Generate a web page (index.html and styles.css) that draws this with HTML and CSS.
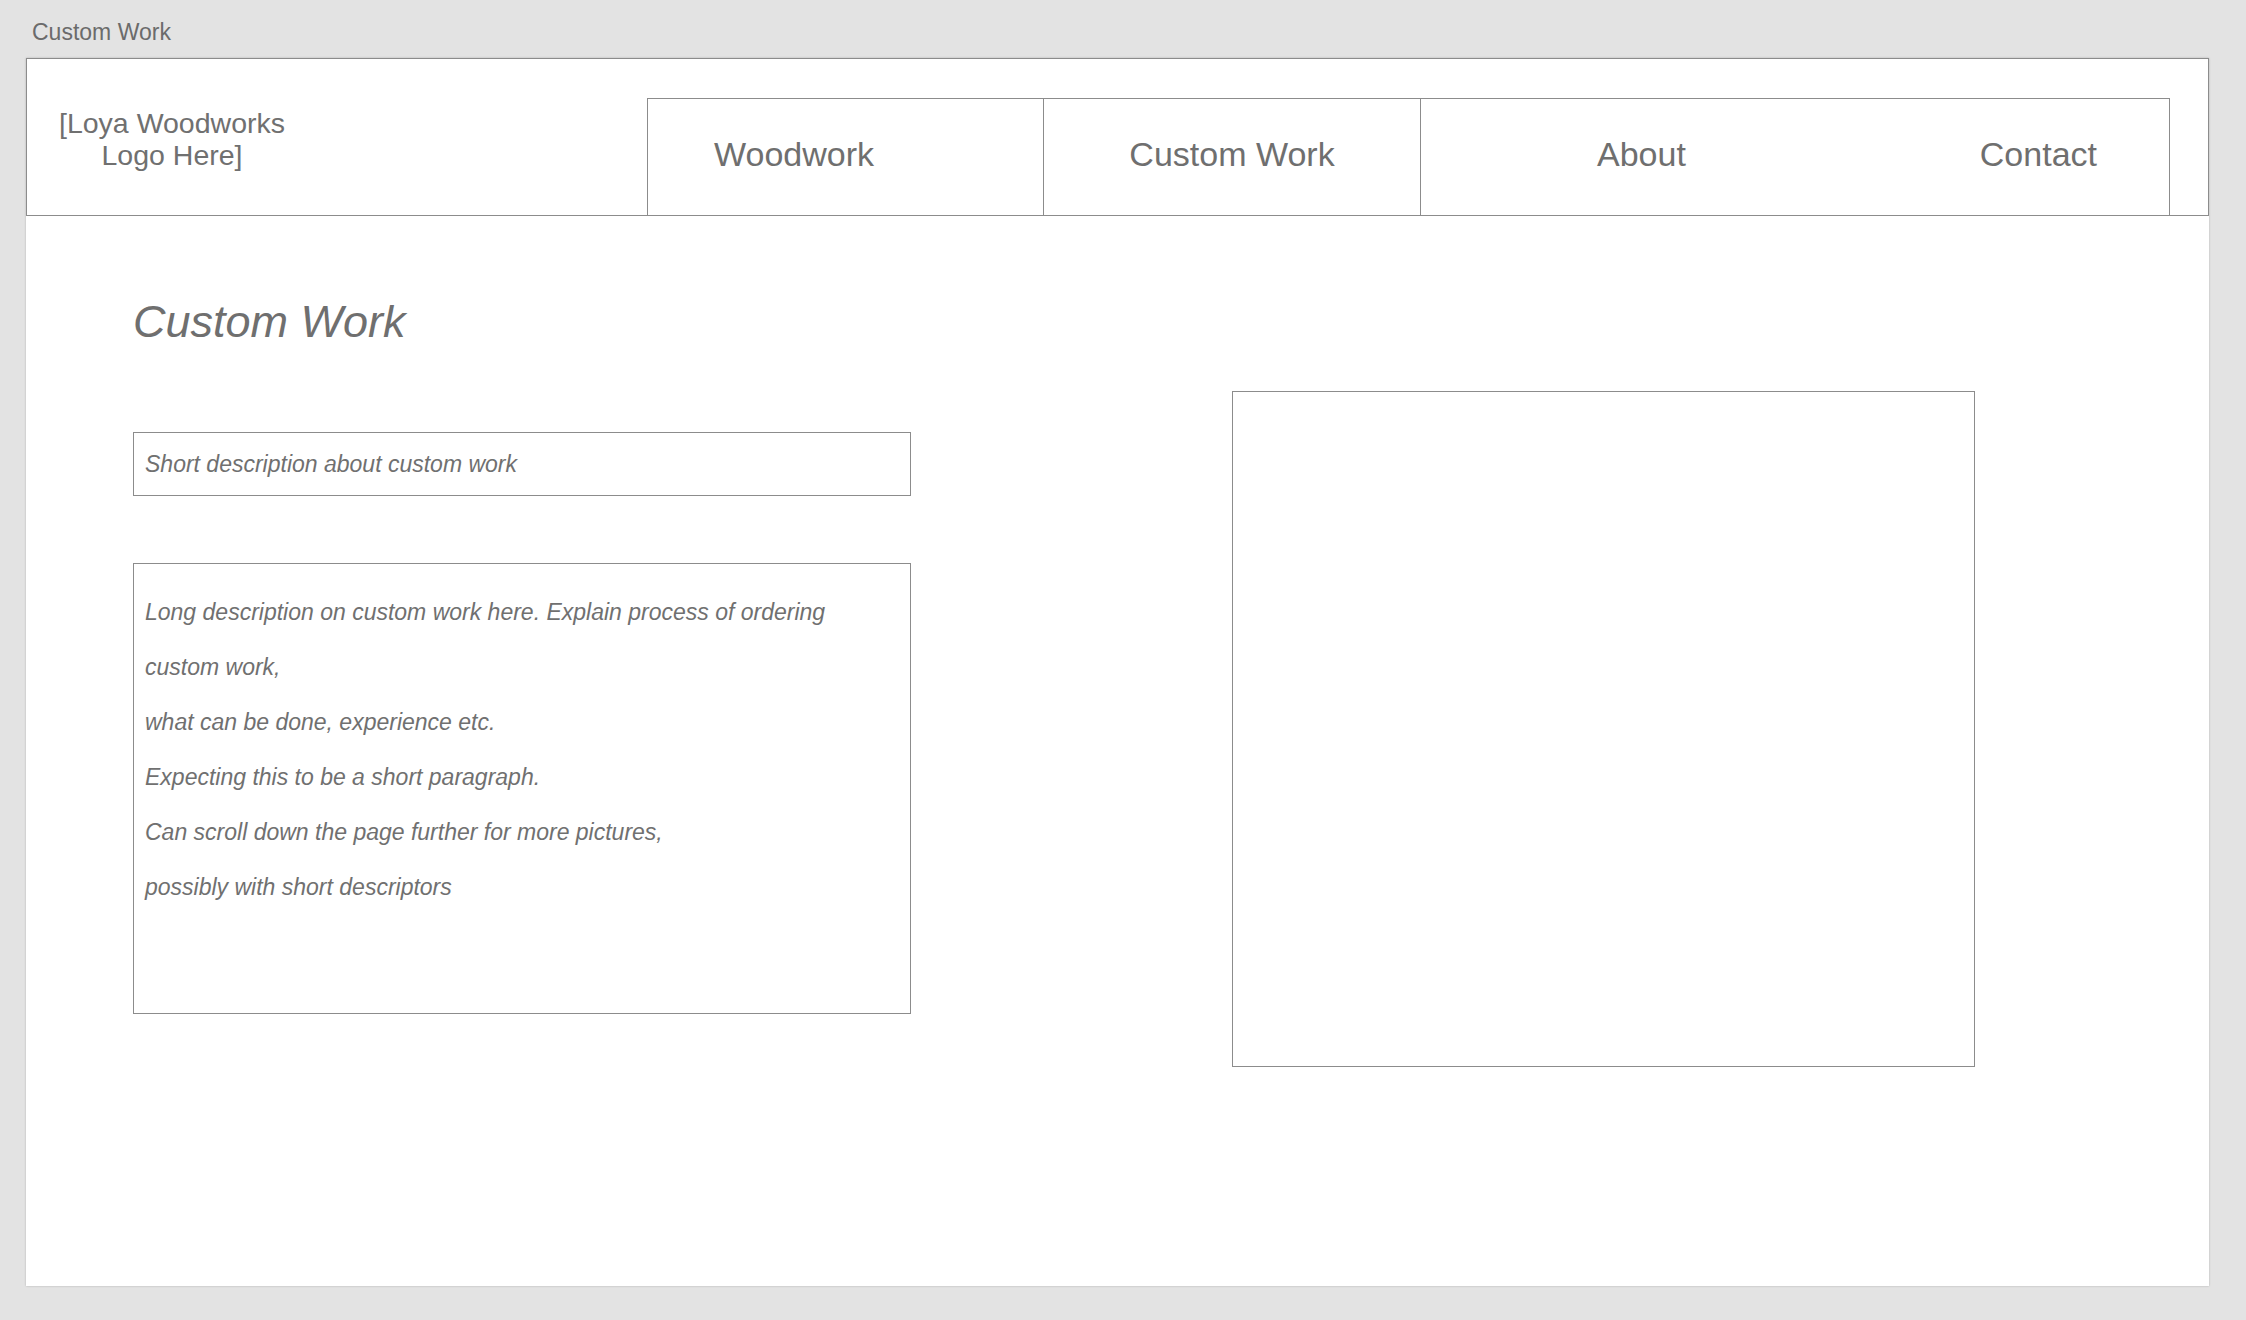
FILE: index.html
```html
<!DOCTYPE html>
<html lang="en">
<head>
<meta charset="utf-8">
<title>Custom Work</title>
<link rel="stylesheet" href="styles.css">
</head>
<body>
  <div class="board-label">Custom Work</div>
  <div class="artboard">
    <header class="header">
      <div class="logo-area">
        <div class="logo">[Loya Woodworks<br>Logo Here]</div>
      </div>
      <nav class="nav">
        <div class="nav-cell nav-woodwork">Woodwork</div>
        <div class="nav-cell nav-custom">Custom Work</div>
        <div class="nav-cell nav-rest"><span>About</span><span>Contact</span></div>
      </nav>
    </header>
    <main class="content">
      <section class="left-col">
        <h1 class="page-title">Custom Work</h1>
        <div class="short-box">Short description about custom work</div>
        <div class="long-box">
          <p>Long description on custom work here. Explain process of ordering</p>
          <p>custom work,</p>
          <p>what can be done, experience etc.</p>
          <p>Expecting this to be a short paragraph.</p>
          <p>Can scroll down the page further for more pictures,</p>
          <p>possibly with short descriptors</p>
        </div>
      </section>
      <div class="image-box"></div>
    </main>
  </div>
</body>
</html>
```
FILE: styles.css
```css
* { box-sizing: border-box; }

html, body {
  margin: 0;
  padding: 0;
}

body {
  background: #e3e3e3;
  font-family: "Liberation Sans", Arial, sans-serif;
  color: #707070;
  width: 2246px;
  height: 1320px;
  overflow: hidden;
}

.board-label {
  height: 58px;
  padding: 21px 0 0 32px;
  font-size: 23px;
  line-height: 23px;
  color: #6b6b6b;
}

.artboard {
  margin-left: 26px;
  width: 2183px;
  height: 1228px;
  background: #ffffff;
  box-shadow: 0 0 2px rgba(0, 0, 0, 0.22);
  display: flex;
  flex-direction: column;
}

.header {
  height: 158px;
  border: 1px solid #8c8c8c;
  display: flex;
  align-items: stretch;
}

.logo-area {
  width: 620px;
  flex: none;
}

.logo {
  width: 290px;
  margin-top: 48px;
  text-align: center;
  font-size: 28.5px;
  line-height: 32px;
}

.nav {
  align-self: flex-end;
  height: 117px;
  margin-right: 38px;
  display: flex;
  border-top: 1px solid #8c8c8c;
  border-right: 1px solid #8c8c8c;
}

.nav-cell {
  height: 100%;
  border-left: 1px solid #8c8c8c;
  display: flex;
  align-items: center;
  padding-bottom: 5px;
  font-size: 34px;
  color: #6f6f6f;
}

.nav-woodwork {
  width: 396px;
  padding-left: 66px;
}

.nav-custom {
  width: 377px;
  justify-content: center;
}

.nav-rest {
  width: 749px;
  padding-left: 176px;
  padding-right: 72px;
  justify-content: space-between;
}

.content {
  display: flex;
  align-items: flex-start;
  padding-left: 107px;
}

.left-col {
  width: 778px;
  flex: none;
}

.page-title {
  margin: 83px 0 0 0;
  height: 45px;
  font-size: 45px;
  line-height: 45px;
  font-weight: normal;
  font-style: italic;
  color: #6f6f6f;
}

.short-box {
  margin-top: 88px;
  height: 64px;
  border: 1px solid #8c8c8c;
  display: flex;
  align-items: center;
  padding-left: 11px;
  font-size: 23px;
  font-style: italic;
  color: #707070;
}

.long-box {
  margin-top: 67px;
  height: 451px;
  border: 1px solid #8c8c8c;
  padding: 21px 0 0 11px;
  font-size: 23px;
  font-style: italic;
  color: #707070;
}

.long-box p {
  margin: 0;
  line-height: 55px;
}

.image-box {
  margin-left: 321px;
  margin-top: 175px;
  width: 743px;
  height: 676px;
  border: 1px solid #8c8c8c;
  flex: none;
}
```
